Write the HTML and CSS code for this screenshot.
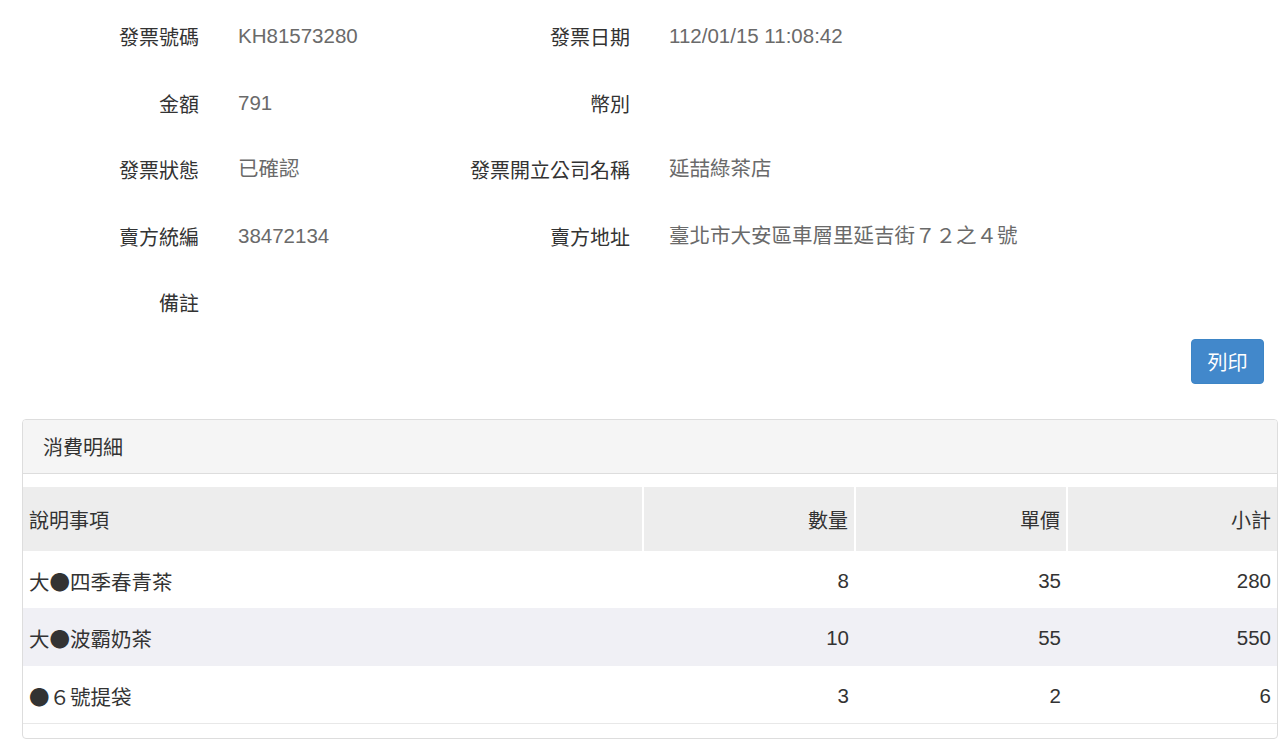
FILE: index.html
```html
<!DOCTYPE html>
<html lang="zh-Hant">
<head>
<meta charset="utf-8">
<title>發票明細</title>
<link rel="stylesheet" href="styles.css">
</head>
<body>
<div class="page">
  <div class="info">
    <div class="lbl">發票號碼</div><div class="val">KH81573280</div>
    <div class="lbl">發票日期</div><div class="val">112/01/15 11:08:42</div>

    <div class="lbl">金額</div><div class="val">791</div>
    <div class="lbl">幣別</div><div class="val"></div>

    <div class="lbl">發票狀態</div><div class="val">已確認</div>
    <div class="lbl">發票開立公司名稱</div><div class="val">延喆綠茶店</div>

    <div class="lbl">賣方統編</div><div class="val">38472134</div>
    <div class="lbl">賣方地址</div><div class="val">臺北市大安區車層里延吉街７２之４號</div>

    <div class="lbl">備註</div><div class="val"></div>
    <div class="lbl"></div><div class="val"></div>
  </div>

  <div class="actions">
    <button class="btn-print" type="button">列印</button>
  </div>

  <div class="panel">
    <div class="panel-heading">消費明細</div>
    <div class="panel-body">
      <table class="items">
        <thead>
          <tr>
            <th class="c-desc">說明事項</th>
            <th class="c-num">數量</th>
            <th class="c-num">單價</th>
            <th class="c-num c-last">小計</th>
          </tr>
        </thead>
        <tbody>
          <tr>
            <td>大<span class="dot">●</span>四季春青茶</td>
            <td class="num">8</td>
            <td class="num">35</td>
            <td class="num">280</td>
          </tr>
          <tr>
            <td>大<span class="dot">●</span>波霸奶茶</td>
            <td class="num">10</td>
            <td class="num">55</td>
            <td class="num">550</td>
          </tr>
          <tr>
            <td><span class="dot">●</span>６號提袋</td>
            <td class="num">3</td>
            <td class="num">2</td>
            <td class="num">6</td>
          </tr>
        </tbody>
      </table>
    </div>
  </div>
</div>
</body>
</html>
```
FILE: styles.css
```css
* {
  box-sizing: border-box;
}

html, body {
  margin: 0;
  padding: 0;
  background: #fff;
}

body {
  font-family: "Liberation Sans", "Noto Sans CJK TC", sans-serif;
  font-size: 20px;
  color: #333;
}

.page {
  padding: 5px 2px 0 22px;
}

/* invoice header fields: label / value pairs in two columns */
.info {
  display: grid;
  grid-template-columns: 177px 176px 177px 1fr;
  grid-auto-rows: 66.5px;
  column-gap: 39px;
  align-items: center;
}

.lbl {
  text-align: right;
  color: #333;
  line-height: 28px;
}

.val {
  color: #6a6a6a;
  font-size: 20.5px;
  line-height: 28px;
  margin-top: -4px;
}

.actions {
  display: flex;
  justify-content: flex-end;
  padding-right: 14px;
  margin-top: 1px;
}

.btn-print {
  width: 73px;
  height: 45px;
  border: 1px solid #3d85c6;
  border-radius: 4px;
  background: #4288cb;
  color: #fff;
  font-family: "Noto Sans CJK TC", sans-serif;
  font-size: 20px;
  padding: 0;
  line-height: 43px;
}

/* line items panel */
.panel {
  margin-top: 35px;
  border: 1px solid #ddd;
  border-radius: 4px;
  height: 320px;
}

.panel-heading {
  height: 54px;
  background: #f5f5f5;
  border-bottom: 1px solid #ddd;
  border-radius: 3px 3px 0 0;
  padding: 1px 20px 0;
  line-height: 54px;
  color: #333;
}

.panel-body {
  padding-top: 13px;
}

.items {
  width: 1254px;
  border-collapse: collapse;
  table-layout: fixed;
}

.items th {
  background: #ededed;
  height: 64px;
  font-weight: normal;
  color: #333;
  padding: 2px 6px 0;
}

.items th.c-desc {
  width: 620px;
  text-align: left;
}

.items th.c-num {
  width: 212px;
  text-align: right;
  border-left: 2px solid #fff;
}

.items th.c-last {
  width: 210px;
}

.items td {
  height: 57.5px;
  padding: 3px 6px 0;
  color: #333;
  font-size: 20.5px;
}

.items td.num {
  text-align: right;
}

.items tbody tr:nth-child(even) td {
  background: #f0f0f5;
}

.items tbody tr:last-child td {
  border-bottom: 1px solid #e8e8e8;
}

.dot {
  font-family: "Noto Sans CJK TC", sans-serif;
}
```
